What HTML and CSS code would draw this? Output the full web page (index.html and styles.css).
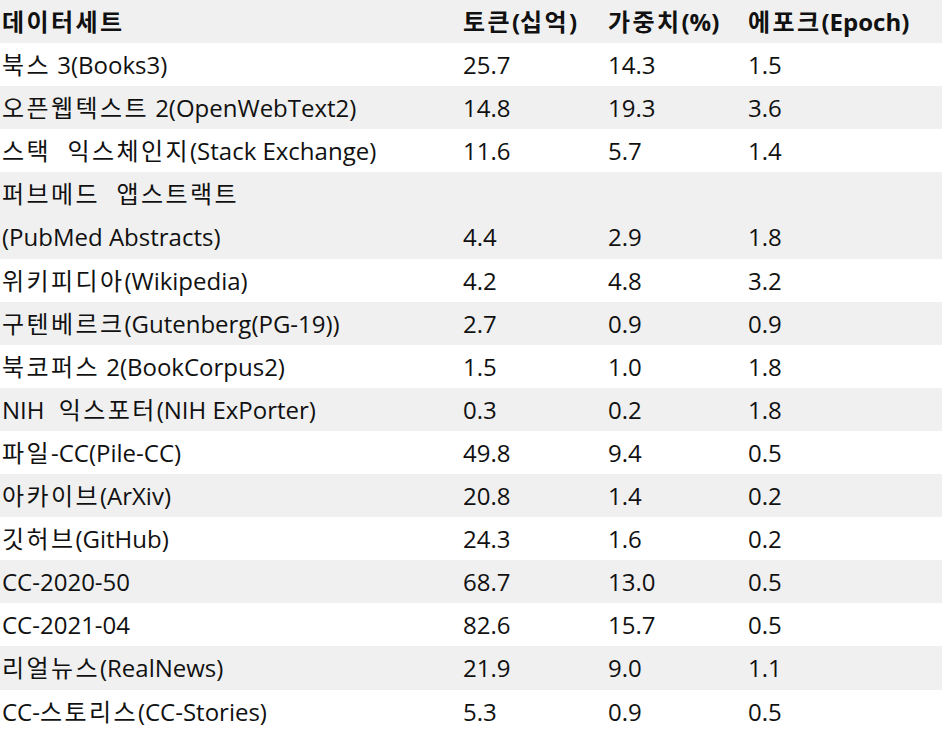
FILE: index.html
```html
<!DOCTYPE html>
<html lang="ko">
<head>
<meta charset="utf-8">
<title>데이터세트</title>
<link rel="stylesheet" href="styles.css">
</head>
<body>
<table class="data">
  <colgroup>
    <col class="c1"><col class="c2"><col class="c3"><col class="c4">
  </colgroup>
  <thead>
    <tr><th><span class="ko">데이터세트</span></th><th><span class="ko">토큰</span>(<span class="ko">십억</span>)</th><th><span class="ko">가중치</span>(%)</th><th><span class="ko">에포크</span>(Epoch)</th></tr>
  </thead>
  <tbody>
    <tr><td><span class="ko">북스</span> 3(Books3)</td><td>25.7</td><td>14.3</td><td>1.5</td></tr>
    <tr><td><span class="ko">오픈웹텍스트</span> 2(OpenWebText2)</td><td>14.8</td><td>19.3</td><td>3.6</td></tr>
    <tr><td><span class="ko wide">스택 익스체인지</span>(Stack Exchange)</td><td>11.6</td><td>5.7</td><td>1.4</td></tr>
    <tr><td><span class="ko wide">퍼브메드 앱스트랙트</span><br>(PubMed Abstracts)</td><td>4.4</td><td>2.9</td><td>1.8</td></tr>
    <tr><td><span class="ko">위키피디아</span>(Wikipedia)</td><td>4.2</td><td>4.8</td><td>3.2</td></tr>
    <tr><td><span class="ko">구텐베르크</span>(Gutenberg(PG-19))</td><td>2.7</td><td>0.9</td><td>0.9</td></tr>
    <tr><td><span class="ko">북코퍼스</span> 2(BookCorpus2)</td><td>1.5</td><td>1.0</td><td>1.8</td></tr>
    <tr><td><span class="wide">NIH <span class="ko">익스포터</span></span>(NIH ExPorter)</td><td>0.3</td><td>0.2</td><td>1.8</td></tr>
    <tr><td><span class="ko">파일</span>-CC(Pile-CC)</td><td>49.8</td><td>9.4</td><td>0.5</td></tr>
    <tr><td><span class="ko">아카이브</span>(ArXiv)</td><td>20.8</td><td>1.4</td><td>0.2</td></tr>
    <tr><td><span class="ko">깃허브</span>(GitHub)</td><td>24.3</td><td>1.6</td><td>0.2</td></tr>
    <tr><td>CC-2020-50</td><td>68.7</td><td>13.0</td><td>0.5</td></tr>
    <tr><td>CC-2021-04</td><td>82.6</td><td>15.7</td><td>0.5</td></tr>
    <tr><td><span class="ko">리얼뉴스</span>(RealNews)</td><td>21.9</td><td>9.0</td><td>1.1</td></tr>
    <tr><td>CC-<span class="ko">스토리스</span>(CC-Stories)</td><td>5.3</td><td>0.9</td><td>0.5</td></tr>
  </tbody>
</table>
</body>
</html>
```
FILE: styles.css
```css
html, body {
  margin: 0;
  padding: 0;
  background: #ffffff;
}
.data {
  width: 942px;
  border-collapse: collapse;
  table-layout: fixed;
  font-family: "Open Sans", "Noto Sans CJK KR", sans-serif;
  font-size: 24px;
  color: #111111;
}
.c1 { width: 461px; }
.c2 { width: 145px; }
.c3 { width: 140px; }
.c4 { width: 196px; }
.data th,
.data td {
  padding: 0 0 0 2px;
  line-height: 43.1px;
  text-align: left;
  vertical-align: bottom;
  white-space: nowrap;
}
.data th {
  font-weight: 700;
}
.ko {
  letter-spacing: 2.4px;
}
.wide {
  word-spacing: 8px;
}
.data thead tr {
  background: #f0f0f0;
}
.data tbody tr:nth-child(even) {
  background: #f0f0f0;
}
```
